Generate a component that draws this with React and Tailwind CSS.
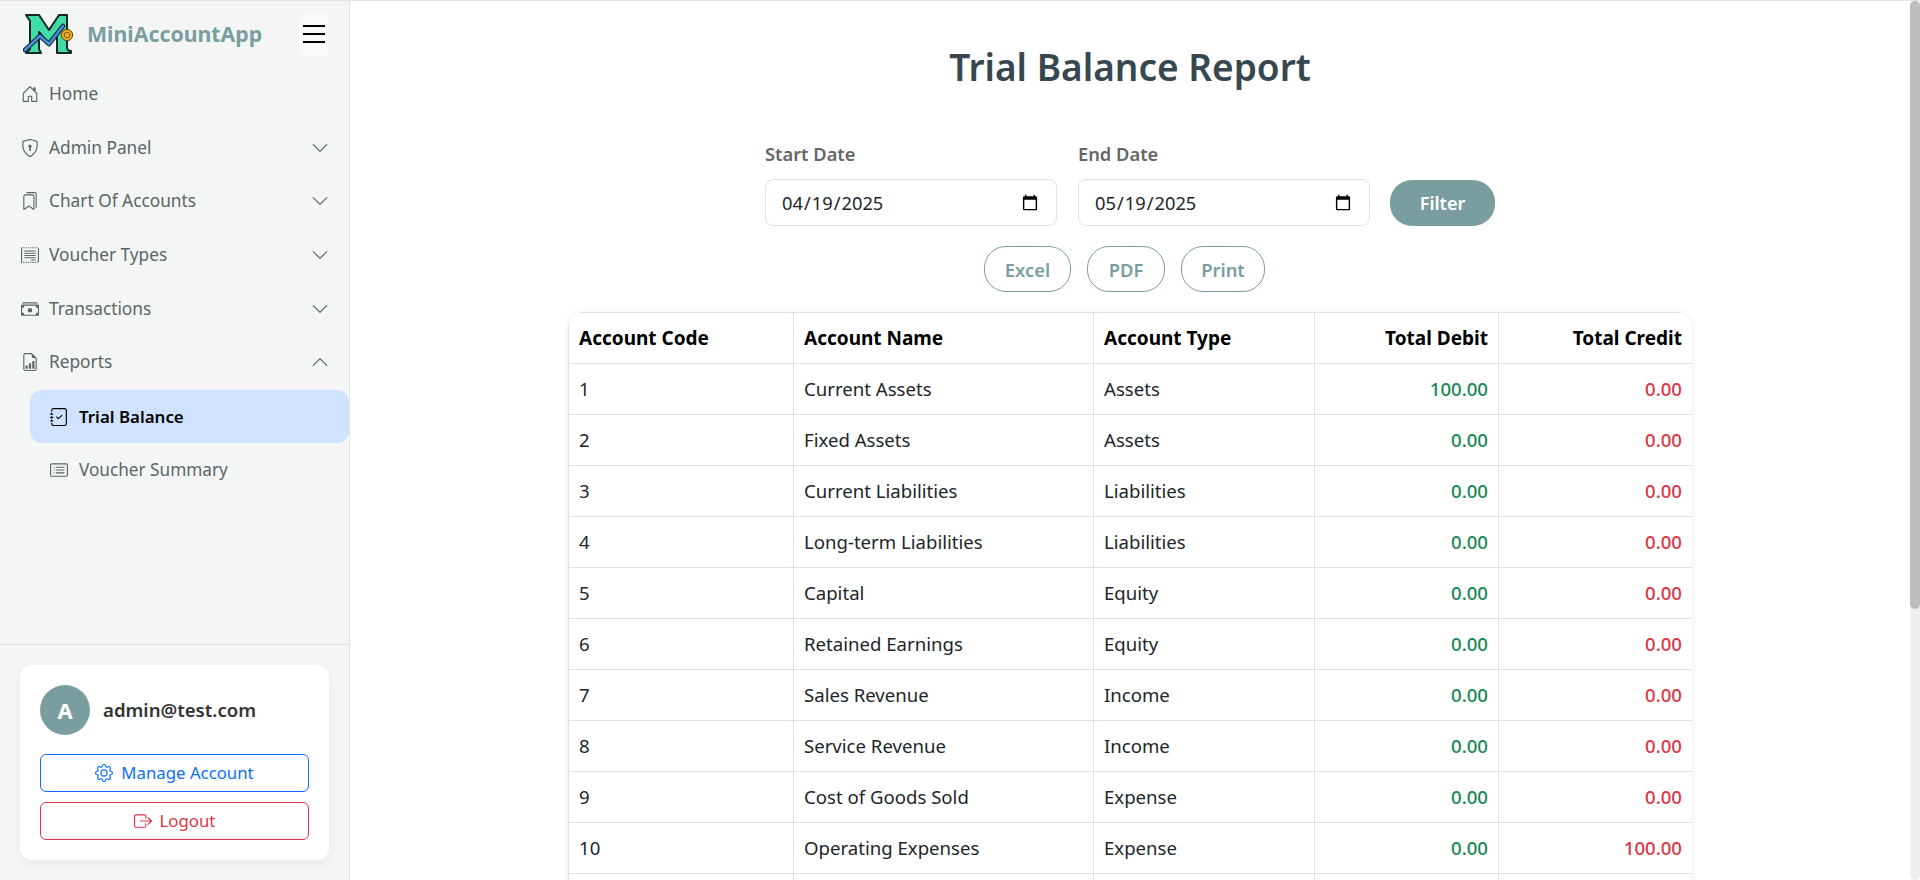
import {
  BsHouseDoor, BsShieldLock, BsBookmarks, BsCashStack, BsFileEarmarkBarGraph,
  BsJournalCheck, BsCardList, BsChevronDown, BsChevronUp, BsGear, BsBoxArrowRight,
} from 'react-icons/bs';

const VoucherIcon = ({ className }) => (
  <svg className={className} viewBox="0 0 16 16" fill="none" stroke="currentColor">
    <path d="M0.5 2v12M15.5 2v12" />
    <path d="M0 1.5h16M0 14.5h16" strokeDasharray="1 1" />
    <path d="M3 4.5h10M3 6.5h10M3 8.5h10M3 10.5h10M9 12.5h4" strokeWidth="0.9" />
  </svg>
);

const navItems = [
  { icon: BsHouseDoor, label: 'Home' },
  { icon: BsShieldLock, label: 'Admin Panel', chevron: 'down' },
  { icon: BsBookmarks, label: 'Chart Of Accounts', chevron: 'down' },
  { icon: VoucherIcon, label: 'Voucher Types', chevron: 'down' },
  { icon: BsCashStack, label: 'Transactions', chevron: 'down' },
  { icon: BsFileEarmarkBarGraph, label: 'Reports', chevron: 'up' },
];

const rows = [
  ['1', 'Current Assets', 'Assets', '100.00', '0.00'],
  ['2', 'Fixed Assets', 'Assets', '0.00', '0.00'],
  ['3', 'Current Liabilities', 'Liabilities', '0.00', '0.00'],
  ['4', 'Long-term Liabilities', 'Liabilities', '0.00', '0.00'],
  ['5', 'Capital', 'Equity', '0.00', '0.00'],
  ['6', 'Retained Earnings', 'Equity', '0.00', '0.00'],
  ['7', 'Sales Revenue', 'Income', '0.00', '0.00'],
  ['8', 'Service Revenue', 'Income', '0.00', '0.00'],
  ['9', 'Cost of Goods Sold', 'Expense', '0.00', '0.00'],
  ['10', 'Operating Expenses', 'Expense', '0.00', '100.00'],
];

const Logo = () => (
  <svg width="52" height="42" viewBox="0 0 52 42" fill="none">
    <path
      d="M3 2 H16 L26 17 L36 2 H44 V34 C44 37 46 38 48 38 V40 H34 V20 L26 31 L16 19 V36 L18 40 H3 L7 36 V8 Z"
      fill="#3fdca6"
      stroke="#10262a"
      strokeWidth="2"
      strokeLinejoin="round"
    />
    <path d="M2 37 L17 23 L26 31 L40 13" stroke="#10262a" strokeWidth="4.5" strokeLinecap="round" strokeLinejoin="round" />
    <path d="M2 37 L17 23 L26 31 L40 13" stroke="#4a90e2" strokeWidth="2.4" strokeLinecap="round" strokeLinejoin="round" />
    <circle cx="44" cy="22" r="5.6" fill="#f2ae1c" stroke="#5a4208" strokeWidth="1" />
    <circle cx="44" cy="22" r="2.8" stroke="#7a5a08" strokeWidth="1" />
  </svg>
);

const NavRow = ({ item }) => {
  const Icon = item.icon;
  return (
    <a className="flex h-[53.7px] items-center pl-[21px] pr-[20px] text-[#5b6566]">
      <Icon className="h-[18px] w-[18px] shrink-0" />
      <span className="ml-[10px] flex-1 text-[17.3px]">{item.label}</span>
      {item.chevron === 'down' && <BsChevronDown className="h-[18px] w-[18px]" />}
      {item.chevron === 'up' && <BsChevronUp className="h-[18px] w-[18px]" />}
    </a>
  );
};

const Sidebar = () => (
  <aside className="flex h-full w-[350px] shrink-0 flex-col border-r border-[#dee2e6] bg-[#f4f6f6]">
    <div className="flex h-[66px] shrink-0 items-center pl-[23px] pr-5">
      <Logo />
      <span className="ml-3 flex-1 text-[21.3px] font-bold text-[#7a9e9f]">MiniAccountApp</span>
      <button className="flex h-11 w-[30px] items-center justify-center rounded-lg bg-[#f8f9fa]">
        <svg width="30" height="30" viewBox="0 0 30 30">
          <path d="M4 7h22M4 15h22M4 23h22" stroke="#000" strokeWidth="2" />
        </svg>
      </button>
    </div>
    <nav className="flex-1">
      {navItems.map((item) => (
        <NavRow key={item.label} item={item} />
      ))}
      <div className="ml-[30px] mt-[1px] flex h-[53px] items-center rounded-xl bg-[#cfe2ff] pl-5 font-semibold text-black">
        <BsJournalCheck className="h-[18px] w-[18px]" />
        <span className="ml-[11px] text-[16.9px]">Trial Balance</span>
      </div>
      <div className="ml-[30px] flex h-[54px] items-center pl-5 text-[#5b6566]">
        <BsCardList className="h-[18px] w-[18px]" />
        <span className="ml-[11px] text-[17.2px]">Voucher Summary</span>
      </div>
    </nav>
    <div className="border-t border-[#dee2e6] px-5 pb-5 pt-5">
      <div className="rounded-xl bg-white p-5 shadow-[0_4px_12px_rgba(0,0,0,0.05)]">
        <div className="flex items-center">
          <div className="flex h-[50px] w-[50px] items-center justify-center rounded-full bg-[#7a9e9f] text-[22px] font-bold text-white">A</div>
          <span className="ml-[13px] text-[18.6px] font-semibold text-[#333]">admin@test.com</span>
        </div>
        <button className="mt-[19px] flex h-[38px] w-full items-center justify-center gap-2 rounded-md border border-[#0d6efd] text-[16.8px] text-[#0d6efd]">
          <BsGear className="h-[18px] w-[18px]" /> Manage Account
        </button>
        <button className="mt-[10px] flex h-[38px] w-full items-center justify-center gap-2 rounded-md border border-[#dc3545] text-[16.8px] text-[#dc3545]">
          <BsBoxArrowRight className="h-[18px] w-[18px]" /> Logout
        </button>
      </div>
    </div>
  </aside>
);

const DateField = ({ label, value }) => (
  <div className="w-[292px]">
    <label className="mb-[12px] block text-[18.3px] font-semibold text-[#666]">{label}</label>
    <input
      type="date"
      defaultValue={value}
      className="h-[47px] w-full rounded-lg border border-[#dee2e6] bg-white px-[15px] text-[18.3px] text-[#212529]"
    />
  </div>
);

const OutlineBtn = ({ children, width }) => (
  <button className={`h-[46px] rounded-[22px] border border-[#7a9e9f] text-[18.4px] font-semibold text-[#7a9e9f] ${width}`}>
    {children}
  </button>
);

const ReportTable = () => (
  <div className="mx-auto mt-[20px] w-[1124px] overflow-hidden rounded-t-2xl shadow-[0_0_6px_rgba(0,0,0,0.08)]">
    <table className="w-full table-fixed border-collapse text-[18.6px] text-[#212529]">
      <colgroup>
        <col className="w-[225px]" />
        <col className="w-[300px]" />
        <col className="w-[221px]" />
        <col className="w-[184px]" />
        <col className="w-[194px]" />
      </colgroup>
      <thead>
        <tr className="h-[51px] text-[19px] text-black">
          <th className="border border-[#dee2e6] px-[10px] text-left font-bold">Account Code</th>
          <th className="border border-[#dee2e6] px-[10px] text-left font-bold">Account Name</th>
          <th className="border border-[#dee2e6] px-[10px] text-left font-bold">Account Type</th>
          <th className="border border-[#dee2e6] px-[10px] text-right font-bold">Total Debit</th>
          <th className="border border-[#dee2e6] px-[10px] text-right font-bold">Total Credit</th>
        </tr>
      </thead>
      <tbody>
        {rows.map((r) => (
          <tr key={r[0]} className="h-[51px]">
            <td className="border border-[#dee2e6] px-[10px]">{r[0]}</td>
            <td className="border border-[#dee2e6] px-[10px]">{r[1]}</td>
            <td className="border border-[#dee2e6] px-[10px]">{r[2]}</td>
            <td className="border border-[#dee2e6] px-[10px] text-right font-medium text-[#198754]">{r[3]}</td>
            <td className="border border-[#dee2e6] px-[10px] text-right font-medium text-[#dc3545]">{r[4]}</td>
          </tr>
        ))}
        {/* next row, cut off by the window */}
        <tr className="h-[51px]">
          <td className="border border-[#dee2e6]" />
          <td className="border border-[#dee2e6]" />
          <td className="border border-[#dee2e6]" />
          <td className="border border-[#dee2e6]" />
          <td className="border border-[#dee2e6]" />
        </tr>
      </tbody>
    </table>
  </div>
);

const Scrollbar = () => (
  <div className="h-full w-[10px] shrink-0 rounded-b-full bg-[#efefef]">
    <div className="h-[608px] rounded-full bg-[#bdbdbd]" />
  </div>
);

const App = () => {
  return (
    <div
      className="flex h-screen overflow-hidden border-t border-[#e2e2e2] bg-white"
      style={{ fontFamily: '"Noto Sans", "Open Sans", sans-serif' }}
    >
      <Sidebar />
      <main className="h-full min-w-0 flex-1 overflow-hidden">
        <h1 className="mt-[41px] text-center text-[37px] font-semibold leading-[50px] text-[#37474f]">Trial Balance Report</h1>
        <div className="mt-[48px] flex items-end justify-center gap-[21px]">
          <DateField label="Start Date" value="2025-04-19" />
          <DateField label="End Date" value="2025-05-19" />
          <button className="-ml-[1px] h-[46px] w-[105px] rounded-[22px] bg-[#7a9e9f] text-[18px] font-semibold text-white">Filter</button>
        </div>
        <div className="mt-[20px] flex justify-center gap-4 pr-[11px]">
          <OutlineBtn width="w-[87px]">Excel</OutlineBtn>
          <OutlineBtn width="w-[78px]">PDF</OutlineBtn>
          <OutlineBtn width="w-[84px]">Print</OutlineBtn>
        </div>
        <ReportTable />
      </main>
      <Scrollbar />
    </div>
  );
};

export default App;
